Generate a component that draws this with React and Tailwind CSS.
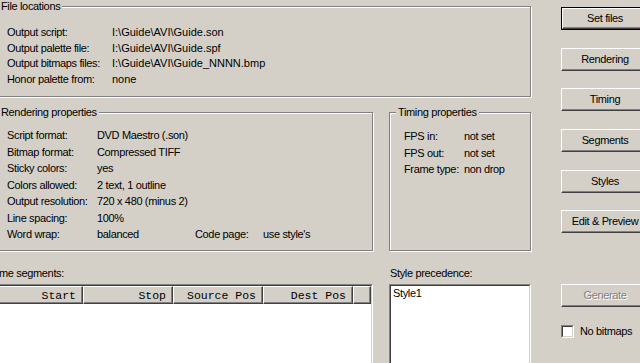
import React from "react";

function Group({ title, className, children }) {
  return (
    <div
      className={`relative shrink-0 border border-[#808080] shadow-[inset_1px_1px_0_#fff,1px_1px_0_#fff] ${className}`}
    >
      <span className="absolute left-[6px] top-[-7px] bg-[#d4d0c8] px-[2px] leading-[13px] whitespace-nowrap">
        {title}
      </span>
      {children}
    </div>
  );
}

function Btn({ children, def, disabled, className }) {
  return (
    <div
      className={`w-[88px] h-[23px] shrink-0 ${def ? "border border-black" : ""} ${className}`}
    >
      <div className="w-full h-full border-t border-l border-t-white border-l-white border-b border-r border-b-[#404040] border-r-[#404040] shadow-[inset_-1px_-1px_0_#808080] flex items-center justify-center leading-[13px] whitespace-nowrap">
        <span
          className={
            disabled
              ? "text-[#808080] [text-shadow:1px_1px_0_#fff]"
              : "text-black"
          }
        >
          {children}
        </span>
      </div>
    </div>
  );
}

function Sunken({ className, children }) {
  return (
    <div
      className={`shrink-0 border border-t-[#808080] border-l-[#808080] border-b-white border-r-white ${className}`}
    >
      <div className="w-full h-full border border-t-[#404040] border-l-[#404040] border-b-[#d4d0c8] border-r-[#d4d0c8] bg-white overflow-hidden">
        {children}
      </div>
    </div>
  );
}

function HeaderCell({ children, className }) {
  return (
    <div
      className={`h-[18px] shrink-0 bg-[#d4d0c8] border-t border-l border-t-white border-l-white border-b border-r border-b-[#404040] border-r-[#404040] shadow-[inset_-1px_-1px_0_#808080] flex items-center justify-end pr-[6px] font-['Liberation_Mono',monospace] text-[11.5px] leading-[13px] tracking-normal ${className}`}
    >
      {children}
    </div>
  );
}

export default function App() {
  const files = [
    ["Output script:", "I:\\Guide\\AVI\\Guide.son"],
    ["Output palette file:", "I:\\Guide\\AVI\\Guide.spf"],
    ["Output bitmaps files:", "I:\\Guide\\AVI\\Guide_NNNN.bmp"],
    ["Honor palette from:", "none"],
  ];
  const rendering = [
    ["Script format:", "DVD Maestro (.son)"],
    ["Bitmap format:", "Compressed TIFF"],
    ["Sticky colors:", "yes"],
    ["Colors allowed:", "2 text, 1 outline"],
    ["Output resolution:", "720 x 480 (minus 2)"],
    ["Line spacing:", "100%"],
  ];
  const timing = [
    ["FPS in:", "not set"],
    ["FPS out:", "not set"],
    ["Frame type:", "non drop"],
  ];

  return (
    <div className="w-[640px] h-[363px] overflow-hidden bg-[#d4d0c8] flex items-start font-['Liberation_Sans',Arial,sans-serif] text-[11px] tracking-[-0.35px] text-black">
      {/* left column */}
      <div className="-ml-[8px] w-[539px] shrink-0 flex flex-col pt-[6px]">
        <Group title="File locations" className="h-[91px] pl-[14px] pt-[18px]">
          {files.map(([l, v]) => (
            <div key={l} className="flex leading-[15.7px] whitespace-nowrap">
              <span className="w-[105px] shrink-0">{l}</span>
              <span className="tracking-normal">{v}</span>
            </div>
          ))}
        </Group>

        <div className="flex shrink-0 gap-[16px] mt-[15px]">
          <Group
            title="Rendering properties"
            className="w-[381px] h-[139px] pl-[14px] pt-[14px]"
          >
            {rendering.map(([l, v]) => (
              <div key={l} className="flex leading-[16.5px] whitespace-nowrap">
                <span className="w-[90px] shrink-0">{l}</span>
                <span>{v}</span>
              </div>
            ))}
            <div className="flex leading-[16.5px] whitespace-nowrap">
              <span className="w-[90px] shrink-0">Word wrap:</span>
              <span className="w-[98px] shrink-0">balanced</span>
              <span className="w-[68px] shrink-0">Code page:</span>
              <span>use style's</span>
            </div>
          </Group>
          <Group
            title="Timing properties"
            className="w-[142px] h-[139px] pl-[14px] pt-[15px]"
          >
            {timing.map(([l, v]) => (
              <div key={l} className="flex leading-[16.5px] whitespace-nowrap">
                <span className="w-[60px] shrink-0">{l}</span>
                <span>{v}</span>
              </div>
            ))}
          </Group>
        </div>

        <div className="flex shrink-0 gap-[16px] mt-[16px]">
          <div className="w-[381px] shrink-0 flex flex-col">
            <div className="leading-[13px] -ml-[1px] whitespace-nowrap">Time segments:</div>
            <Sunken className="mt-[4px] h-[90px]">
              <div className="flex">
                <HeaderCell className="w-[89px]">Start</HeaderCell>
                <HeaderCell className="w-[90px]">Stop</HeaderCell>
                <HeaderCell className="w-[90px]">Source Pos</HeaderCell>
                <HeaderCell className="w-[90px]">Dest Pos</HeaderCell>
                <HeaderCell className="flex-1">{""}</HeaderCell>
              </div>
            </Sunken>
          </div>
          <div className="w-[142px] shrink-0 flex flex-col">
            <div className="leading-[13px] ml-[1px] whitespace-nowrap">Style precedence:</div>
            <Sunken className="mt-[4px] h-[90px]">
              <div className="pl-[2px] pt-[1px] leading-[13px]">Style1</div>
            </Sunken>
          </div>
        </div>
      </div>

      {/* right column */}
      <div className="ml-[30px] shrink-0 flex flex-col">
        <Btn def className="mt-[7px]">Set files</Btn>
        <Btn className="mt-[18px]">Rendering</Btn>
        <Btn className="mt-[17px]">Timing</Btn>
        <Btn className="mt-[18px]">Segments</Btn>
        <Btn className="mt-[18px]">Styles</Btn>
        <Btn className="mt-[17px]">Edit &amp; Preview</Btn>
        <Btn disabled className="mt-[51px]">Generate</Btn>
        <div className="mt-[18px] flex items-center">
          <Sunken className="w-[13px] h-[13px]" />
          <span className="ml-[6px] leading-[13px]">No bitmaps</span>
        </div>
      </div>
    </div>
  );
}
